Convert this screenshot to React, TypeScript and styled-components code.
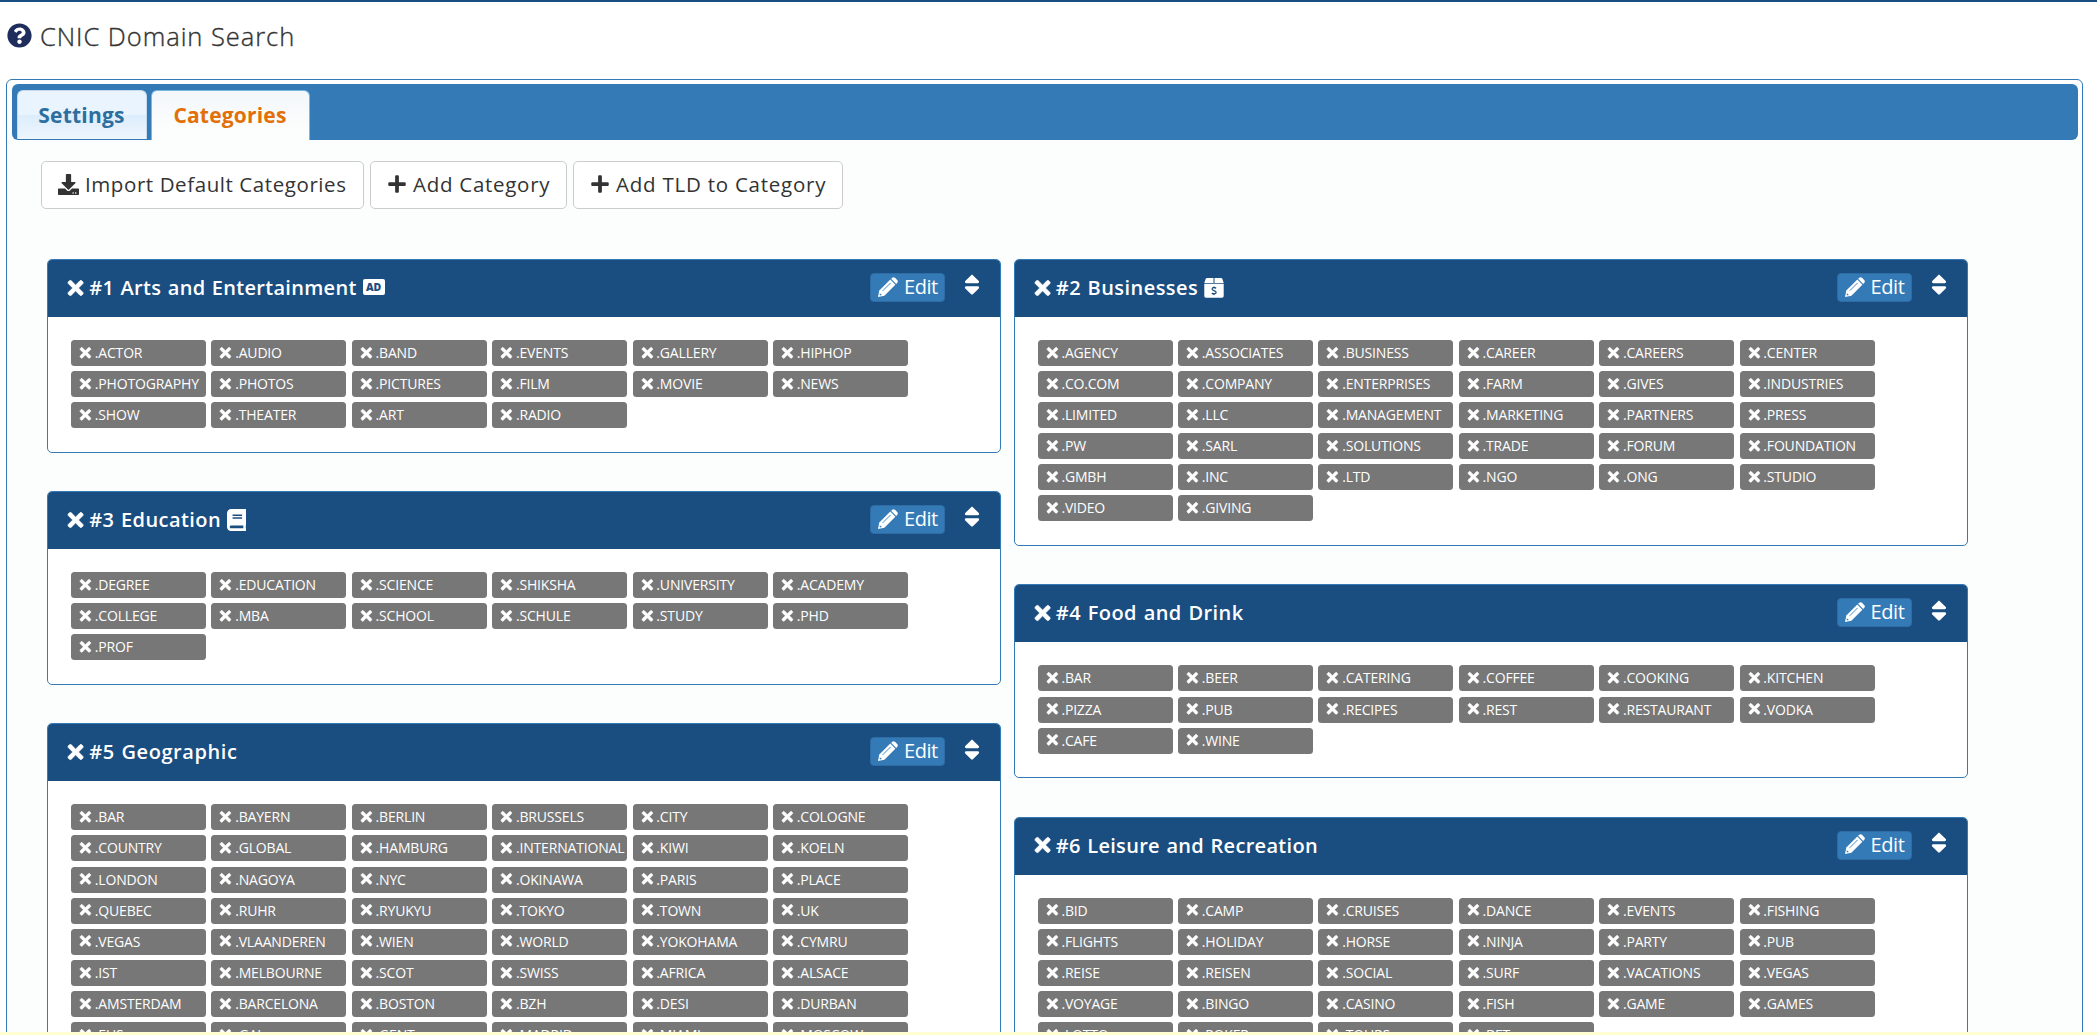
import React from 'react';
import styled, { createGlobalStyle } from 'styled-components';
import { FaQuestionCircle, FaDownload, FaPlus, FaTimes, FaSort, FaBook } from 'react-icons/fa';

const Global = createGlobalStyle`
  * { box-sizing: border-box; }
  html, body { margin: 0; height: 1035px; overflow: hidden; background: #fff; }
  body { font-family: "Open Sans", "Noto Sans", sans-serif; color: #333; }
  svg { display: block; flex: none; }
`;

const Page = styled.div`
  width: 2097px;
  height: 1035px;
  display: flex;
  flex-direction: column;
  border-top: 2px solid #1a4d80;
  border-bottom: 3px solid #ffffd0;
  overflow: hidden;
`;
const Title = styled.h1`
  flex: none;
  margin: 0;
  height: 77px;
  padding: 21px 0 0 7px;
  display: flex;
  align-items: flex-start;
  gap: 8px;
  font-size: 25.5px;
  line-height: 27px;
  font-weight: 400;
  white-space: nowrap;
  svg { color: #1f2d5c; }
`;
const TitleText = styled.span`
  font-weight: 300;
  letter-spacing: 0.95px;
  -webkit-text-stroke: 0.35px #333;
`;
const Tabs = styled.main`
  flex: none;
  width: 2077px;
  height: 1200px;
  margin-left: 6px;
  padding: 4px;
  border: 1px solid #337ab7;
  border-radius: 6px;
  background: linear-gradient(#fff 0, #fcfdfd 60px);
`;
const TabBar = styled.nav`
  display: flex;
  align-items: flex-start;
  gap: 4px;
  height: 56px;
  margin-left: 1px;
  padding: 6px 5px 0;
  border-radius: 6px;
  background: #337ab7;
`;
const Tab = styled.div<{ $active?: boolean; $w: number }>`
  display: flex;
  align-items: center;
  justify-content: center;
  width: ${p => p.$w}px;
  height: ${p => (p.$active ? 50 : 49)}px;
  padding: 0 1px ${p => (p.$active ? 1 : 0)}px 0;
  border: 1px solid ${p => (p.$active ? '#79b7e7' : '#c5dbec')};
  border-bottom: 0;
  border-radius: 6px 6px 0 0;
  background: ${p =>
    p.$active
      ? 'linear-gradient(#f3f7fa, #fcfdfd 75%)'
      : 'linear-gradient(#e9f4fe 0 50%, #dcedfc 50%, #eef6fe)'};
  color: ${p => (p.$active ? '#e17009' : '#2e6e9e')};
  font-size: 21px;
  font-weight: 700;
  letter-spacing: 0.2px;
`;
const Toolbar = styled.div`
  display: flex;
  gap: 6px;
  margin: 21px 0 50px 30px;
`;
const ToolButton = styled.button<{ $w: number; $track: number }>`
  display: flex;
  align-items: center;
  gap: 6px;
  width: ${p => p.$w}px;
  height: 48px;
  padding: 0 0 2px 16px;
  border: 1px solid #ccc;
  border-radius: 5px;
  background: #fff;
  color: #333;
  font: 400 20.5px "Open Sans", sans-serif;
  letter-spacing: ${p => p.$track}px;
  white-space: nowrap;
`;
const Columns = styled.div`
  display: flex;
  gap: 12.6px;
  margin-left: 36px;
`;
const Column = styled.div`
  width: 954px;
  display: flex;
  flex-direction: column;
  gap: 38.2px;
`;
const Panel = styled.section`
  border: 1px solid #337ab7;
  border-radius: 5px;
  background: #fff;
  overflow: hidden;
`;
const PanelHead = styled.header`
  display: flex;
  align-items: center;
  height: 57px;
  padding: 0 20px 2px;
  background: #1a4d80;
  color: #fff;
`;
const PanelTitle = styled.h3`
  display: flex;
  align-items: center;
  flex: 1;
  margin: 0;
  font-size: 20px;
  font-weight: 550;
  white-space: pre;
`;
const Name = styled.span<{ $track: number }>`
  margin: 0 6px;
  letter-spacing: ${p => p.$track}px;
  word-spacing: 1px;
`;
const AdBadge = styled.span`
  display: flex;
  align-items: center;
  justify-content: center;
  width: 22px;
  height: 16px;
  margin-top: -1px;
  border-radius: 2px;
  background: #fff;
  color: #1a4d80;
  font-size: 10.5px;
  font-weight: 800;
  line-height: 1;
`;
const BookIcon = styled(FaBook)`
  width: 19.3px;
  height: 22px;
`;
const RemoveCategoryIcon = styled(FaTimes)`
  width: 15.2px;
  height: 22px;
  overflow: visible;
  stroke-width: 18px;
`;
const RemoveTldIcon = styled(FaTimes)`
  width: 10.8px;
  height: 15.6px;
  overflow: visible;
  stroke-width: 22px;
`;
const SortIcon = styled(FaSort)`
  width: 16px;
  height: 25.5px;
`;
const EditButton = styled.button`
  display: flex;
  align-items: center;
  gap: 6px;
  width: 75px;
  height: 29px;
  padding: 0 0 2px 7px;
  border: 1px solid #2e6da4;
  border-radius: 4px;
  background: #337ab7;
  color: #fff;
  font: 400 20px "Open Sans", sans-serif;
  letter-spacing: -0.45px;
`;
const SortHandle = styled.span`
  margin: -5px 0 0 19px;
`;
const Labels = styled.div`
  display: grid;
  grid-template-columns: repeat(6, 135px);
  column-gap: 5.4px;
  row-gap: 5.1px;
  padding: 23px 0 23.8px 23px;
`;
const Label = styled.span`
  display: flex;
  align-items: center;
  gap: 4px;
  height: 26px;
  padding: 0 0 1px 9px;
  border-radius: 3.5px;
  background: #777;
  color: #fff;
  font-size: 14px;
  letter-spacing: -0.18px;
  white-space: nowrap;
  overflow: hidden;
`;

const BoxDollar = () => (
  <svg width="20" height="20" viewBox="0 0 20 20">
    <path d="M3 0H9.5V5H0.3L1.6 1Q2 0 3 0ZM10.5 0H17Q18 0 18.4 1L19.7 5H10.5ZM0.3 5.7H19.7V18Q19.7 19.7 18 19.7H2Q0.3 19.7 0.3 18Z" fill="#fff" />
    <path d="M12.2 10.3Q10 8.9 8.5 10Q7.3 11.7 10 12.6Q13 13.6 11.7 15.3Q10 16.5 7.8 15.1M10 8.4V9.7M10 15.7V17" fill="none" stroke="#1a4d80" strokeWidth="1.3" />
  </svg>
);

const Pencil = () => (
  <svg width="20" height="20" viewBox="0 0 20 20">
    <path d="M0 20L1.3 13.6L12.3 2.6L17.4 7.7L6.4 18.7Z" fill="#fff" />
    <path d="M13.1 1.8L14.2 0.7Q15.6-0.4 17 0.8L19.2 3Q20.4 4.4 19.3 5.8L18.2 6.9Z" fill="#fff" />
    <path d="M4.7 13.8L12.6 5.9" stroke="#337ab7" strokeWidth="0.9" />
    <path d="M1.9 16.2L3.8 18.1L2.5 18.4L1.6 17.5Z" fill="#337ab7" />
  </svg>
);

type Category = { name: string; track: number; icon?: React.ReactNode; tlds: string };

const left: Category[] = [
  { name: '#1 Arts and Entertainment', track: 0.29, icon: <AdBadge>AD</AdBadge>, tlds: 'ACTOR AUDIO BAND EVENTS GALLERY HIPHOP PHOTOGRAPHY PHOTOS PICTURES FILM MOVIE NEWS SHOW THEATER ART RADIO' },
  { name: '#3 Education', track: 0.42, icon: <BookIcon />, tlds: 'DEGREE EDUCATION SCIENCE SHIKSHA UNIVERSITY ACADEMY COLLEGE MBA SCHOOL SCHULE STUDY PHD PROF' },
  { name: '#5 Geographic', track: 0.58, tlds: 'BAR BAYERN BERLIN BRUSSELS CITY COLOGNE COUNTRY GLOBAL HAMBURG INTERNATIONAL KIWI KOELN LONDON NAGOYA NYC OKINAWA PARIS PLACE QUEBEC RUHR RYUKYU TOKYO TOWN UK VEGAS VLAANDEREN WIEN WORLD YOKOHAMA CYMRU IST MELBOURNE SCOT SWISS AFRICA ALSACE AMSTERDAM BARCELONA BOSTON BZH DESI DURBAN EUS GAL GENT MADRID MIAMI MOSCOW' },
];
const right: Category[] = [
  { name: '#2 Businesses', track: 0.43, icon: <BoxDollar />, tlds: 'AGENCY ASSOCIATES BUSINESS CAREER CAREERS CENTER CO.COM COMPANY ENTERPRISES FARM GIVES INDUSTRIES LIMITED LLC MANAGEMENT MARKETING PARTNERS PRESS PW SARL SOLUTIONS TRADE FORUM FOUNDATION GMBH INC LTD NGO ONG STUDIO VIDEO GIVING' },
  { name: '#4 Food and Drink', track: 0.45, tlds: 'BAR BEER CATERING COFFEE COOKING KITCHEN PIZZA PUB RECIPES REST RESTAURANT VODKA CAFE WINE' },
  { name: '#6 Leisure and Recreation', track: 0.3, tlds: 'BID CAMP CRUISES DANCE EVENTS FISHING FLIGHTS HOLIDAY HORSE NINJA PARTY PUB REISE REISEN SOCIAL SURF VACATIONS VEGAS VOYAGE BINGO CASINO FISH GAME GAMES LOTTO POKER TOURS BET' },
];

const CategoryPanel = ({ name, track, icon, tlds }: Category) => (
  <Panel>
    <PanelHead>
      <PanelTitle>
        <RemoveCategoryIcon />
        <Name $track={track}>{name}</Name>
        {icon}
      </PanelTitle>
      <EditButton><Pencil />Edit</EditButton>
      <SortHandle><SortIcon /></SortHandle>
    </PanelHead>
    <Labels>
      {tlds.split(' ').map(t => (
        <Label key={t}><RemoveTldIcon />.{t}</Label>
      ))}
    </Labels>
  </Panel>
);

export default function App() {
  return (
    <>
      <Global />
      <Page>
        <Title><FaQuestionCircle size={25} /><TitleText>CNIC Domain Search</TitleText></Title>
        <Tabs>
          <TabBar>
            <Tab $w={130}>Settings</Tab>
            <Tab $w={159} $active>Categories</Tab>
          </TabBar>
          <Toolbar>
            <ToolButton $w={323} $track={0.58}><FaDownload size={21} />Import Default Categories</ToolButton>
            <ToolButton $w={197} $track={0.72}><FaPlus size={20} />Add Category</ToolButton>
            <ToolButton $w={270} $track={0.76}><FaPlus size={20} />Add TLD to Category</ToolButton>
          </Toolbar>
          <Columns>
            <Column>{left.map(c => <CategoryPanel key={c.name} {...c} />)}</Column>
            <Column>{right.map(c => <CategoryPanel key={c.name} {...c} />)}</Column>
          </Columns>
        </Tabs>
      </Page>
    </>
  );
}
